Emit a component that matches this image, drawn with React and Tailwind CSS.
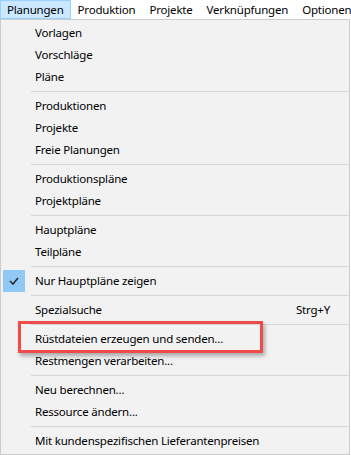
import React from "react";

const groups = [
  [{ label: "Vorlagen" }, { label: "Vorschläge" }, { label: "Pläne" }],
  [{ label: "Produktionen" }, { label: "Projekte" }, { label: "Freie Planungen" }],
  [{ label: "Produktionspläne" }, { label: "Projektpläne" }],
  [{ label: "Hauptpläne" }, { label: "Teilpläne" }],
  [{ label: "Nur Hauptpläne zeigen", checked: true }],
  [{ label: "Spezialsuche", shortcut: "Strg+Y" }],
  [{ label: "Rüstdateien erzeugen und senden...", marked: true }, { label: "Restmengen verarbeiten..." }],
  [{ label: "Neu berechnen..." }, { label: "Ressource ändern..." }],
  [{ label: "Mit kundenspezifischen Lieferantenpreisen" }],
];

const menus = ["Planungen", "Produktion", "Projekte", "Verknüpfungen", "Optionen"];

const MenuItem = ({ item }) => (
  <div className="relative flex h-[22px] items-center">
    <div className="flex h-[22px] w-[34px] shrink-0 items-center pl-[2px]">
      {item.checked && (
        <div className="flex h-[22px] w-[22px] items-center justify-center bg-[#90c8f6]">
          <svg width="10" height="8" viewBox="0 0 10 8" fill="none">
            <path d="M1 4l3 3 5-6" stroke="#2b2b2b" strokeWidth="1.6" />
          </svg>
        </div>
      )}
    </div>
    <span className="whitespace-nowrap">{item.label}</span>
    {item.shortcut && <span className="ml-auto mr-[19px]">{item.shortcut}</span>}
    {item.marked && (
      <div className="absolute left-[17px] top-[-7px] h-[32px] w-[245px] border-[3px] border-[#ef4b4b] shadow-[2px_3px_4px_rgba(0,0,0,0.3)]" />
    )}
  </div>
);

const Separator = () => (
  <div className="flex h-[7px] items-center pl-[30px] pr-[1px]">
    <div className="h-px w-full bg-[#d5d5d5]" />
  </div>
);

export default function App() {
  return (
    <div
      className="h-[455px] w-[351px] overflow-hidden bg-white text-[11.5px] tracking-[-0.2px] text-black"
      style={{ fontFamily: '"Noto Sans", sans-serif' }}
    >
      <div className="flex h-[19px] items-center">
        {menus.map((m, i) => (
          <div
            key={m}
            className={
              i === 0
                ? "flex h-[19px] items-center whitespace-nowrap border border-[#99d1ff] bg-[#cce8ff] px-[6px] leading-none"
                : "flex h-[19px] items-center whitespace-nowrap border border-transparent px-[6px] leading-none"
            }
          >
            {m}
          </div>
        ))}
      </div>
      <div className="w-[350px] border border-[#cccccc] bg-[#f2f2f2] py-[2px]">
        {groups.map((g, gi) => (
          <div key={gi}>
            {gi > 0 && <Separator />}
            {g.map((item) => (
              <MenuItem key={item.label} item={item} />
            ))}
          </div>
        ))}
      </div>
    </div>
  );
}
